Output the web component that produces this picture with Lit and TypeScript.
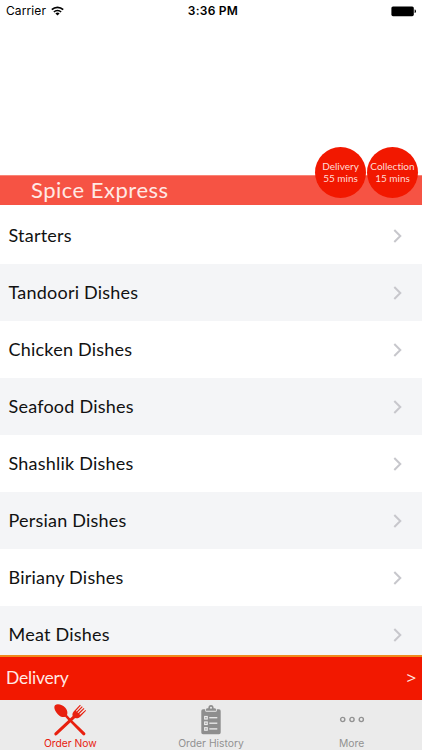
import { LitElement, html, css, svg } from "lit";
import { customElement } from "lit/decorators.js";

const chevron = html`<svg class="chevron" width="9" height="14" viewBox="0 0 9 14"><path d="M1.3 1 L7.3 7 L1.3 13" fill="none" stroke="#c7c7cc" stroke-width="2"/></svg>`;

const wifi = html`<svg class="wifi" width="13" height="10" viewBox="0 0 13 10">
  <g fill="none" stroke="#000" stroke-width="1.7"><path d="M.8 3.7a8.1 8.1 0 0 1 11.4 0"/><path d="M2.9 6a5.1 5.1 0 0 1 7.2 0"/></g>
  <path d="M4.4 7.5a3 3 0 0 1 4.2 0L6.5 9.6z"/></svg>`;

const battery = html`<svg class="battery" width="26" height="11" viewBox="0 0 26 11">
  <rect x=".4" y=".4" width="22.4" height="9.8" rx="1.6"/><path d="M23.6 3.6h.5q.9.6.9 1.7t-.9 1.7h-.5z"/></svg>`;

const cutlery = html`<svg class="icon" width="32" height="32" viewBox="0 0 32 32">
  <g fill="#e8200f">
    <path d="M1 1.200C3.400-.6 8.600.6 11.300 3.700c2.100 2.400 2.500 5 1.700 7.300l2.700 3 15.300 14.700c1.300 1.500-.7 3.600-2.200 2.300L13.900 15.700l-2.700-2.900c-2.300.6-5.200-.1-7.400-2.600C1 7.200-.7 3.100 1 1.200z"/>
    <path d="M2.900 31C1.400 32.400-.6 30.400.8 28.800L18.700 12.100c-.6-1.900-.3-3.300 1-4.700L26 .7l.8.7-4.900 5.500.8.700L27.900 2.200l.8.700-5.200 5.500.8.700 5.400-5.200.7.800-5.100 5.400.8.700 5.400-4.900.6.800-6.100 6.200c-1.500 1.400-3 1.700-4.900 1.100z"/>
  </g></svg>`;

const clipboard = html`<svg class="icon" width="20" height="30" viewBox="0 0 20 30">
  <path fill="#8e8e8e" d="M2 4.200h2.200v1.300q0 1.200 1.200 1.200h9.200q1.200 0 1.200-1.200V4.200H18q1.700 0 1.700 1.700v21.600q0 1.700-1.700 1.700H2Q.3 29.200.3 27.500V5.900Q.3 4.200 2 4.200z"/>
  <path fill="#8e8e8e" fill-rule="evenodd" d="M5 5.800V4.500q0-1.300 1.700-1.300h.6C7.400 1.100 8.300 0 10 0s2.600 1.100 2.700 3.200h.6Q15 3.200 15 4.500v1.300zM10 1.700a1 1 0 1 0 0 2 1 1 0 0 0 0-2z"/>
  <g fill="none" stroke="#ededed">
    ${[12.7, 18.2, 23.9].map((y) => svg`<rect x="3.700" y=${y - 1.2} width="2.500" height="2.500" stroke-width="1.200"/><path d="M8.300 ${y}h8" stroke-width="1.300"/>`)}
  </g></svg>`;

const dots = html`<svg class="icon" width="26" height="7" viewBox="0 0 26 7">
  <g fill="none" stroke="#929292" stroke-width="1.400"><circle cx="3.700" cy="3.500" r="2.100"/><circle cx="13" cy="3.500" r="2.100"/><circle cx="22.300" cy="3.500" r="2.100"/></g></svg>`;

const categories = [
  "Starters",
  "Tandoori Dishes",
  "Chicken Dishes",
  "Seafood Dishes",
  "Shashlik Dishes",
  "Persian Dishes",
  "Biriany Dishes",
  "Meat Dishes",
];

@customElement("app-root")
export class AppRoot extends LitElement {
  static styles = css`
    :host {
      display: flex;
      flex-direction: column;
      height: 750px;
      overflow: hidden;
      background: #fff;
      color: #111;
      font-family: Lato, "Open Sans", sans-serif;
      font-variant-ligatures: none;
    }
    .status {
      flex: none;
      height: 22px;
      display: grid;
      grid-template-columns: 1fr auto 1fr;
      align-items: center;
      padding: 0 5px 0 6px;
      font: 12px/22px Inter, sans-serif;
      color: #000;
    }
    .carrier { display: flex; align-items: center; gap: 5px; letter-spacing: 0.1px; }
    .time { font-weight: 600; letter-spacing: 0.25px; padding-left: 3px; }
    .battery { justify-self: end; }
    .hero {
      flex: none;
      position: relative;
      height: 185px;
      display: flex;
      flex-direction: column;
      justify-content: flex-end;
      padding-bottom: 2px;
      box-sizing: border-box;
    }
    .title {
      height: 30px;
      line-height: 27px;
      padding-left: 31px;
      background: #f65344;
      color: #ffe9e4;
      font-size: 22px;
      letter-spacing: 0.5px;
      border-top: 1px solid #f98476;
      box-sizing: border-box;
    }
    .badges {
      position: absolute;
      right: 4px;
      top: 125px;
      display: flex;
      gap: 1px;
    }
    .badge {
      width: 51px;
      height: 51px;
      padding-bottom: 2px;
      box-sizing: border-box;
      border-radius: 50%;
      background: #f21800;
      color: #ffdcd5;
      font-size: 10px;
      line-height: 12px;
      display: flex;
      flex-direction: column;
      justify-content: center;
      align-items: center;
      white-space: nowrap;
    }
    .list { flex: 1; min-height: 0; overflow: hidden; }
    .row {
      height: 57px;
      box-sizing: border-box;
      padding: 0 20px 2px 8.500px;
      display: flex;
      align-items: center;
      justify-content: space-between;
      font-size: 18px;
      letter-spacing: 0.22px;
    }
    .row:nth-child(even) { background: #f4f5f7; }
    .chevron { margin-top: 2px; }
    .delivery {
      flex: none;
      height: 45px;
      box-sizing: border-box;
      border-top: 2px solid #f08a1c;
      background: #f21800;
      color: #ffe9e4;
      padding: 0 6px 2px 6px;
      display: flex;
      justify-content: space-between;
      align-items: center;
      font-size: 17.500px;
      letter-spacing: -0.2px;
    }
    .arrow { font: 17px/20px "Open Sans", sans-serif; }
    .tabs {
      flex: none;
      height: 50px;
      background: #ebebeb;
      display: grid;
      grid-template-columns: repeat(3, 1fr);
    }
    .tab {
      display: flex;
      flex-direction: column;
      align-items: center;
      color: #929292;
      font: 10.300px/12px Inter, sans-serif;
    }
    .glyph { height: 35px; padding-top: 2px; display: flex; align-items: center; }
    .active { color: #e8200f; }
  `;

  render() {
    return html`
      <div class="status">
        <div class="carrier"><span>Carrier</span>${wifi}</div>
        <div class="time">3:36 PM</div>
        ${battery}
      </div>
      <div class="hero">
        <div class="title">Spice Express</div>
        <div class="badges">
          <div class="badge"><span>Delivery</span><span>55 mins</span></div>
          <div class="badge"><span>Collection</span><span>15 mins</span></div>
        </div>
      </div>
      <div class="list">
        ${categories.map((name) => html`<div class="row"><span>${name}</span>${chevron}</div>`)}
      </div>
      <div class="delivery"><span>Delivery</span><span class="arrow">&gt;</span></div>
      <div class="tabs">
        <div class="tab active"><div class="glyph">${cutlery}</div><span>Order Now</span></div>
        <div class="tab"><div class="glyph">${clipboard}</div><span>Order History</span></div>
        <div class="tab"><div class="glyph">${dots}</div><span>More</span></div>
      </div>
    `;
  }
}
